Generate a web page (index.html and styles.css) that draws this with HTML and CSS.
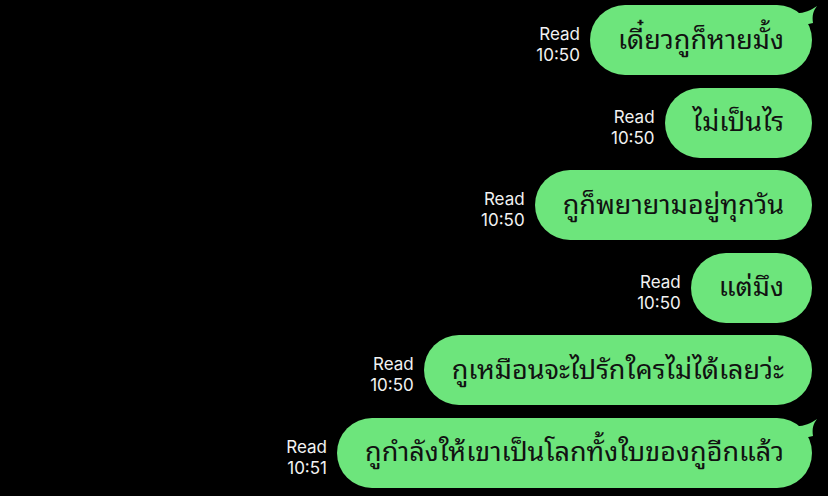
FILE: index.html
```
<!DOCTYPE html>
<html>
<head>
    <link rel="stylesheet" href="styles.css">
</head>
<body>
    <div class="chat">
        <div class="row">
            <div class="meta">Read<br>10:50</div>
            <div class="bubble tail">เดี๋ยวกูก็หายมั้ง
                <svg class="horn" width="24" height="24" viewBox="0 0 24 24"><path d="M0 8 C8 9 16 6 23 1 C19 6 18 11 19 18 L10 20 Z" fill="#6de57c"/></svg>
            </div>
        </div>
        <div class="row">
            <div class="meta">Read<br>10:50</div>
            <div class="bubble">ไม่เป็นไร</div>
        </div>
        <div class="row">
            <div class="meta">Read<br>10:50</div>
            <div class="bubble">กูก็พยายามอยู่ทุกวัน</div>
        </div>
        <div class="row">
            <div class="meta">Read<br>10:50</div>
            <div class="bubble">แต่มึง</div>
        </div>
        <div class="row">
            <div class="meta">Read<br>10:50</div>
            <div class="bubble">กูเหมือนจะไปรักใครไม่ได้เลยว่ะ</div>
        </div>
        <div class="row">
            <div class="meta">Read<br>10:51</div>
            <div class="bubble tail">กูกำลังให้เขาเป็นโลกทั้งใบของกูอีกแล้ว
                <svg class="horn" width="24" height="24" viewBox="0 0 24 24"><path d="M0 8 C8 9 16 6 23 1 C19 6 18 11 19 18 L10 20 Z" fill="#6de57c"/></svg>
            </div>
        </div>
    </div>
</body>
</html>
```

FILE: styles.css
```
body {
    margin: 0;
    background-color: #000;
    font-family: "Noto Sans Thai Looped", "Noto Serif Thai", "Noto Sans Thai", "Noto Sans", sans-serif;
}

.chat {
    display: flex;
    flex-direction: column;
    align-items: flex-end;
    gap: 12.6px;
    padding: 5px 16px 0 0;
}

.row {
    display: flex;
    align-items: flex-end;
    gap: 10px;
}

.meta {
    color: #f2f2f2;
    font-family: "Inter", "Liberation Sans", sans-serif;
    font-size: 17px;
    line-height: 21px;
    text-align: right;
    margin-bottom: 9px;
}

.bubble {
    position: relative;
    display: flex;
    align-items: center;
    box-sizing: border-box;
    height: 70px;
    padding: 0 28px 8px;
    border-radius: 35px;
    background-color: #6de57c;
    color: #111;
    font-size: 27px;
    white-space: nowrap;
}

.horn {
    position: absolute;
    top: 0;
    right: -6px;
}
```
